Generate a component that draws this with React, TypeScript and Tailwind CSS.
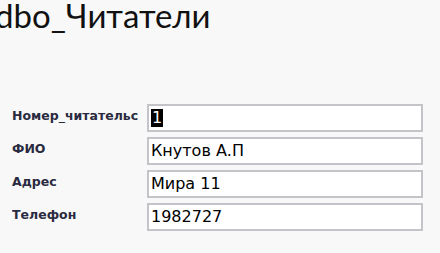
import React from 'react';

const rows = [
  { label: 'Номер_читательс', value: '1', selected: true },
  { label: 'ФИО', value: 'Кнутов А.П' },
  { label: 'Адрес', value: 'Мира 11' },
  { label: 'Телефон', value: '1982727' },
];

export default function App() {
  return (
    <div className="w-[440px] h-[253px] overflow-hidden bg-[#f8f8f8]">
      <h1 className="-ml-[5px] -mt-px text-[33px] leading-[32px] font-normal text-[#111] font-['Lato',sans-serif] whitespace-nowrap">
        dbo_Читатели
      </h1>
      <div className="mt-[73px] flex flex-col gap-[5px] pl-[12px]">
        {rows.map((r) => (
          <div key={r.label} className="flex items-start">
            <div className="w-[135px] pt-[5px] text-[12.5px] leading-[14px] font-bold text-[#2a2a40] font-['DejaVu_Sans',sans-serif] whitespace-nowrap overflow-hidden">
              {r.label}
            </div>
            <div className="w-[276px] h-[28px] border-2 border-[#c4c4c8] bg-white flex items-center pl-[2px] text-[16px] text-black font-['DejaVu_Sans',sans-serif]">
              {r.selected ? <span className="bg-black text-white px-px leading-[18px]">{r.value}</span> : r.value}
            </div>
          </div>
        ))}
      </div>
    </div>
  );
}
